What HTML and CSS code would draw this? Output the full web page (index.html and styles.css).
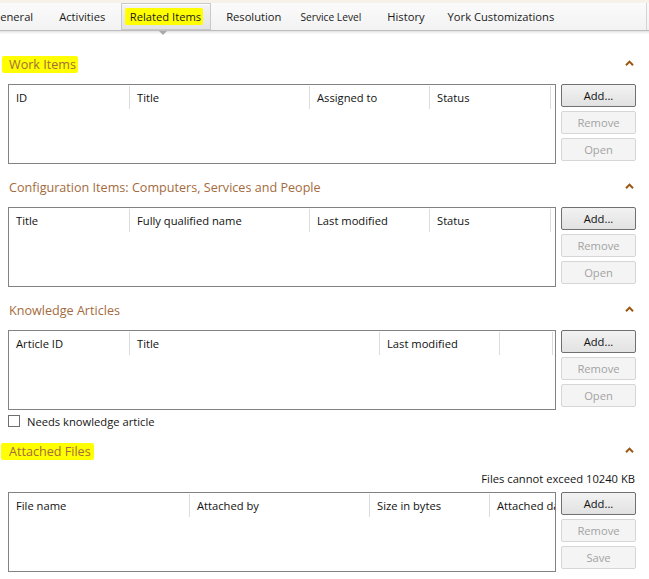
FILE: index.html
```html
<!DOCTYPE html>
<html>
<head>
<meta charset="utf-8">
<title>Related Items</title>
<link rel="stylesheet" href="styles.css">
</head>
<body>
<div class="tabbar">
  <div class="tabs">
    <span class="tab first">General</span>
    <span class="tab">Activities</span>
    <span class="tab active"><span class="hl hl-tab">Related Items</span></span>
    <span class="tab">Resolution</span>
    <span class="tab small">Service Level</span>
    <span class="tab">History</span>
    <span class="tab">York Customizations</span>
  </div>
</div>

<main class="content">
  <section class="section">
    <div class="sec-head">
      <span class="sec-title"><span class="hl hl-work">Work Items</span></span>
      <svg class="chev" width="9" height="6" viewBox="0 0 9 6"><polyline points="1,5.2 4.5,1.6 8,5.2" /></svg>
    </div>
    <div class="sec-body">
      <div class="grid">
        <div class="grid-head cols-work">
          <div class="col">ID</div>
          <div class="col">Title</div>
          <div class="col">Assigned to</div>
          <div class="col">Status</div>
        </div>
      </div>
      <div class="btns">
        <button class="btn">Add...</button>
        <button class="btn" disabled>Remove</button>
        <button class="btn" disabled>Open</button>
      </div>
    </div>
  </section>

  <section class="section">
    <div class="sec-head">
      <span class="sec-title">Configuration Items: Computers, Services and People</span>
      <svg class="chev" width="9" height="6" viewBox="0 0 9 6"><polyline points="1,5.2 4.5,1.6 8,5.2" /></svg>
    </div>
    <div class="sec-body">
      <div class="grid">
        <div class="grid-head cols-work">
          <div class="col">Title</div>
          <div class="col">Fully qualified name</div>
          <div class="col">Last modified</div>
          <div class="col">Status</div>
        </div>
      </div>
      <div class="btns">
        <button class="btn">Add...</button>
        <button class="btn" disabled>Remove</button>
        <button class="btn" disabled>Open</button>
      </div>
    </div>
  </section>

  <section class="section">
    <div class="sec-head">
      <span class="sec-title">Knowledge Articles</span>
      <svg class="chev" width="9" height="6" viewBox="0 0 9 6"><polyline points="1,5.2 4.5,1.6 8,5.2" /></svg>
    </div>
    <div class="sec-body">
      <div class="grid">
        <div class="grid-head cols-ka">
          <div class="col">Article ID</div>
          <div class="col">Title</div>
          <div class="col">Last modified</div>
          <div class="col"></div>
        </div>
      </div>
      <div class="btns">
        <button class="btn">Add...</button>
        <button class="btn" disabled>Remove</button>
        <button class="btn" disabled>Open</button>
      </div>
    </div>
    <label class="check-row"><span class="checkbox"></span>Needs knowledge article</label>
  </section>

  <section class="section">
    <div class="sec-head">
      <span class="sec-title"><span class="hl hl-files">Attached Files</span></span>
      <svg class="chev" width="9" height="6" viewBox="0 0 9 6"><polyline points="1,5.2 4.5,1.6 8,5.2" /></svg>
    </div>
    <div class="note">Files cannot exceed 10240 KB</div>
    <div class="sec-body">
      <div class="grid">
        <div class="grid-head cols-files">
          <div class="col">File name</div>
          <div class="col">Attached by</div>
          <div class="col">Size in bytes</div>
          <div class="col">Attached date</div>
        </div>
      </div>
      <div class="btns">
        <button class="btn">Add...</button>
        <button class="btn" disabled>Remove</button>
        <button class="btn" disabled>Save</button>
      </div>
    </div>
  </section>
</main>
</body>
</html>
```

FILE: styles.css
```css
html, body {
  margin: 0;
  padding: 0;
  background: #ffffff;
}

body {
  width: 649px;
  height: 579px;
  overflow: hidden;
  font-family: "Open Sans", "Liberation Sans", sans-serif;
  font-size: 11.2px;
  color: #151515;
}

/* ---------- tab strip ---------- */
.tabbar {
  border-top: 3px solid #f6f2e9;
  height: 27px;
  background: linear-gradient(#fbfbfb, #f2f2f2);
  border-bottom: 1px solid #bdbdbd;
  box-shadow: 0 1px 0 #e6e6e6, 0 2px 0 #f1f1f1, 0 3px 0 #f8f8f8;
}

.tabs {
  display: flex;
  height: 100%;
  width: 646px;
  border-right: 1px solid #d4d4d4;
}

.tab {
  position: relative;
  display: flex;
  align-items: center;
  height: 100%;
  box-sizing: border-box;
  padding: 0 7.5px;
  margin: 0 4px;
  white-space: nowrap;
  color: #1b1b1b;
}

.tab.first {
  margin-left: -15.5px;
  padding-right: 10.5px;
}

.tab.small {
  font-size: 10.2px;
  padding: 0 10.5px 0 3.5px;
}

.tab.active {
  padding: 0 7px 0 3px;
  border: 1px solid #c8c8c8;
  background: linear-gradient(#f4f4f4, #e3e3e3);
  box-shadow: inset 0 1px 0 #ffffff;
}

.tab.active::after {
  content: "";
  position: absolute;
  top: 100%;
  left: 37px;
  margin-top: 2px;
  border-left: 4px solid transparent;
  border-right: 4px solid transparent;
  border-top: 4px solid #a9a9a9;
}

/* ---------- highlighter marks ---------- */
.hl {
  background: #ffff00;
  border-radius: 2px;
}

.hl-tab {
  padding: 1px 1.5px 1px 5px;
}

.hl-work {
  padding: 0 2px 0 7px;
  margin-left: -7px;
}

.hl-files {
  padding: 0 3px 0 8px;
  margin-left: -8px;
}

/* ---------- content ---------- */
.content {
  padding: 21px 0 0 8px;
}

.section {
  width: 628px;
  margin-bottom: 11px;
}

.sec-head {
  display: flex;
  align-items: center;
  justify-content: space-between;
  height: 24px;
  margin-bottom: 8px;
}

.sec-title {
  font-size: 12.6px;
  color: #a46b3e;
  padding-left: 1px;
  white-space: nowrap;
}

.chev {
  margin-right: 2px;
  margin-top: -2px;
  fill: none;
  stroke: #9a560e;
  stroke-width: 2;
}

.sec-body {
  display: flex;
  gap: 5px;
}

.grid {
  box-sizing: border-box;
  width: 548px;
  height: 80px;
  border: 1px solid #828282;
  background: #ffffff;
  overflow: hidden;
}

.grid-head {
  display: grid;
  height: 24px;
}

.cols-work  { grid-template-columns: 121px 180px 120px 121px; }
.cols-ka    { grid-template-columns: 121px 250px 120px 53px; }
.cols-files { grid-template-columns: 181px 180px 120px 120px; }

.col {
  box-sizing: border-box;
  margin-top: 1px;
  height: 23px;
  line-height: 23px;
  padding-left: 7px;
  border-right: 1px solid #dcdcdc;
  white-space: nowrap;
  overflow: hidden;
  color: #111;
}

.btns {
  display: flex;
  flex-direction: column;
  gap: 4px;
  width: 75px;
}

.btn {
  box-sizing: border-box;
  width: 75px;
  height: 23px;
  padding: 0;
  font-family: inherit;
  font-size: 11.2px;
  color: #111;
  border: 1px solid #707070;
  border-radius: 2px;
  background: linear-gradient(#f2f2f2, #e2e2e2);
}

.btn:disabled {
  color: #a3a3a3;
  border-color: #d6d6d6;
  background: #f4f4f4;
}

.check-row {
  display: flex;
  align-items: center;
  height: 14px;
  margin-top: 4px;
  margin-bottom: 1px;
  color: #151515;
}

.checkbox {
  box-sizing: border-box;
  width: 12px;
  height: 12px;
  margin-right: 7px;
  border: 1px solid #6e6e6e;
  background: #ffffff;
}

.note {
  height: 16px;
  line-height: 16px;
  margin-top: 6px;
  margin-bottom: 5px;
  text-align: right;
  padding-right: 1px;
  color: #151515;
}
```
